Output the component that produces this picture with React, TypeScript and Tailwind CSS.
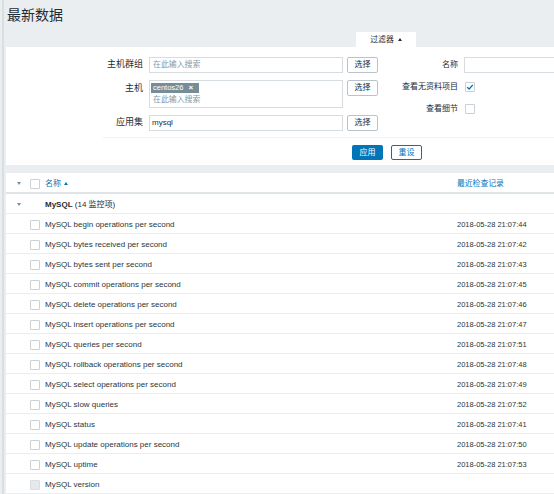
import React from 'react';

const items = [
    { name: 'MySQL begin operations per second', time: '2018-05-28 21:07:44' },
    { name: 'MySQL bytes received per second', time: '2018-05-28 21:07:42' },
    { name: 'MySQL bytes sent per second', time: '2018-05-28 21:07:43' },
    { name: 'MySQL commit operations per second', time: '2018-05-28 21:07:45' },
    { name: 'MySQL delete operations per second', time: '2018-05-28 21:07:46' },
    { name: 'MySQL insert operations per second', time: '2018-05-28 21:07:47' },
    { name: 'MySQL queries per second', time: '2018-05-28 21:07:51' },
    { name: 'MySQL rollback operations per second', time: '2018-05-28 21:07:48' },
    { name: 'MySQL select operations per second', time: '2018-05-28 21:07:49' },
    { name: 'MySQL slow queries', time: '2018-05-28 21:07:52' },
    { name: 'MySQL status', time: '2018-05-28 21:07:41' },
    { name: 'MySQL update operations per second', time: '2018-05-28 21:07:50' },
    { name: 'MySQL uptime', time: '2018-05-28 21:07:53' },
    { name: 'MySQL version', time: '', disabled: true },
];

function Checkbox({ disabled = false }: { disabled?: boolean }) {
    return (
        <span
            className={`block w-[10px] h-[10px] border rounded-[1px] ${disabled ? 'bg-[#e6e9eb] border-[#d9dee1]' : 'bg-white border-[#c9d1d6]'}`}
        />
    );
}

function Arrow() {
    return <span className="block w-0 h-0 border-l-[2px] border-r-[2px] border-t-[3px] border-l-transparent border-r-transparent border-t-[#7b8d98]" />;
}

function SelectButton() {
    return (
        <button className="w-[31px] h-[16px] border border-[#b9c4ca] rounded-[2px] bg-white text-[8px] text-[#1f2c33] leading-none">
            选择
        </button>
    );
}

export default function App() {
    return (
        <div
            className="w-[554px] h-[494px] bg-[#ebeef0] flex overflow-hidden text-[#1f2c33]"
            style={{ fontFamily: '"Liberation Sans", Arial, "Noto Sans CJK SC", sans-serif' }}
        >
            <div className="w-[6px] shrink-0 pl-[2px]">
                <div className="w-[2px] h-full bg-[#d9dee1]" />
            </div>

            <div className="flex-1 flex flex-col min-w-0">
                <div className="h-[32px] pl-[1px] pt-[7px]">
                    <h1 className="text-[14px] leading-[16px]">最新数据</h1>
                </div>

                {/* filter tab */}
                <div className="h-[16px] flex">
                    <div className="ml-[350px] w-[60px] bg-white flex items-center justify-center gap-[4px] text-[7.8px] pt-[1px]">
                        <span>过滤器</span>
                        <span className="block w-0 h-0 border-l-[2px] border-r-[2px] border-b-[3px] border-l-transparent border-r-transparent border-b-[#1f2c33]" />
                    </div>
                </div>

                {/* filter panel */}
                <div className="h-[120px] bg-white flex flex-col">
                    <div className="flex pt-[10px]">
                        <div className="flex flex-col gap-[7px] text-[9px]">
                            <div className="flex items-center h-[16px] gap-[6px]">
                                <span className="w-[137px] text-right">主机群组</span>
                                <div className="w-[194px] h-[16px] border border-[#d6dcdf] flex items-center pl-[3px] text-[7.9px] text-[#8a979e]">在此输入搜索</div>
                                <div className="ml-[-2px]"><SelectButton /></div>
                            </div>
                            <div className="flex items-start h-[28px] gap-[6px]">
                                <span className="w-[137px] text-right pt-[2px]">主机</span>
                                <div className="w-[194px] h-[28px] border border-[#d6dcdf] flex flex-col pl-[1px] pt-[2px]">
                                    <span className="w-[48px] h-[10px] bg-[#768d99] text-white text-[7.5px] flex items-center pl-[2px] gap-[5px] leading-none">
                                        centos26 <span className="font-bold text-[8px]">×</span>
                                    </span>
                                    <span className="pl-[2px] pt-[2px] text-[7.9px] text-[#8a979e] leading-[10px]">在此输入搜索</span>
                                </div>
                                <div className="ml-[-2px]"><SelectButton /></div>
                            </div>
                            <div className="flex items-center h-[16px] gap-[6px]">
                                <span className="w-[137px] text-right">应用集</span>
                                <div className="w-[194px] h-[16px] border border-[#d6dcdf] flex items-center pl-[2px] text-[8px]">mysql</div>
                                <div className="ml-[-2px]"><SelectButton /></div>
                            </div>
                        </div>

                        <div className="flex flex-col gap-[6px] text-[8px]">
                            <div className="flex items-center h-[16px] gap-[6px]">
                                <span className="w-[80px] text-right">名称</span>
                                <div className="w-[100px] h-[16px] border border-[#d6dcdf]" />
                            </div>
                            <div className="flex items-center h-[16px] gap-[7px]">
                                <span className="w-[80px] text-right">查看无资料项目</span>
                                <span className="w-[10px] h-[10px] border border-[#c9d1d6] rounded-[1px] bg-white flex items-center justify-center">
                                    <svg width="8" height="8" viewBox="0 0 8 8"><path d="M1.2 4.2 L3.2 6 L6.8 1.8" fill="none" stroke="#0275b8" strokeWidth="1.3" /></svg>
                                </span>
                            </div>
                            <div className="flex items-center h-[16px] gap-[7px]">
                                <span className="w-[80px] text-right">查看细节</span>
                                <Checkbox />
                            </div>
                        </div>
                    </div>

                    <div className="mt-[6px] ml-[97px] border-t border-[#f1f3f4]" />

                    <div className="flex gap-[8px] ml-[346px] mt-[7px]">
                        <button className="w-[31px] h-[15px] bg-[#0275b8] text-white text-[8px] rounded-[2px] leading-none">应用</button>
                        <button className="w-[31px] h-[15px] bg-white border border-[#0275b8] text-[#0275b8] text-[8px] rounded-[2px] leading-none">重设</button>
                    </div>
                </div>

                <div className="h-[8px] shrink-0" />

                {/* table */}
                <div className="flex-1 bg-white text-[8px]">
                    <div className="h-[21px] border-b-2 border-[#dfe4e7] flex items-center pt-[2px]">
                        <div className="w-[24px] flex justify-center pl-[2px]"><Arrow /></div>
                        <Checkbox />
                        <div className="ml-[5px] flex items-center gap-[3px] text-[#0275b8] w-[412px]">
                            <span>名称</span>
                            <span className="block w-0 h-0 border-l-[2px] border-r-[2px] border-b-[3px] border-l-transparent border-r-transparent border-b-[#0275b8]" />
                        </div>
                        <span className="text-[#0275b8] text-[7.8px]">最近检查记录</span>
                    </div>
                    <div className="h-[20px] border-b border-[#ebeef0] flex items-center pt-[2px]">
                        <div className="w-[24px] flex justify-center pl-[2px]"><Arrow /></div>
                        <span className="ml-[15px]"><span className="font-bold">MySQL</span> (14 监控项)</span>
                    </div>
                    {items.map((item) => (
                        <div key={item.name} className="h-[20px] border-b border-[#ebeef0] flex items-center pt-[2px]">
                            <div className="w-[24px]" />
                            <Checkbox disabled={item.disabled} />
                            <span className="ml-[5px] w-[412px] text-[#2a363c]">{item.name}</span>
                            <span className="text-[7.5px] text-[#2a363c]">{item.time}</span>
                        </div>
                    ))}
                </div>
            </div>
        </div>
    );
}
